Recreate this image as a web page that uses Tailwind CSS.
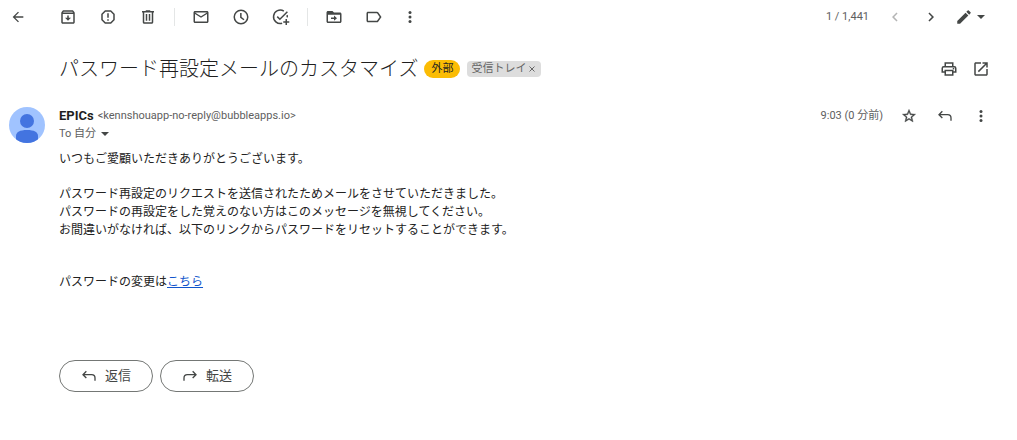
<!DOCTYPE html>
<html lang="ja">
<head>
<meta charset="utf-8">
<meta name="viewport" content="width=device-width, initial-scale=1">
<title>パスワード再設定メールのカスタマイズ</title>
<script src="https://cdn.jsdelivr.net/npm/@tailwindcss/browser@4"></script>
</head>
<body class="min-h-screen bg-white font-['Roboto','Noto_Sans_CJK_JP',sans-serif] text-xs text-[#222222]">
<header class="flex h-[34px] items-center text-[#444746]">
  <button type="button" aria-label="戻る" class="flex h-8 w-9 items-center justify-center"><svg class="size-4" viewBox="0 0 24 24" fill="currentColor"><path d="M20 11H7.83l5.59-5.59L12 4l-8 8 8 8 1.41-1.41L7.83 13H20v-2z"/></svg></button>
  <div class="ml-3 flex">
    <button type="button" aria-label="アーカイブ" class="flex h-8 w-10 items-center justify-center"><svg class="size-[18px]" viewBox="0 0 24 24" fill="currentColor"><path d="M20.5 5.2l-1.4-1.7C18.9 3.2 18.500 3 18 3H6c-.5 0-.9.2-1.200.5L3.500 5.200C3.200 5.600 3 6 3 6.500V19c0 1.100.9 2 2 2h14c1.100 0 2-.9 2-2V6.500c0-.5-.2-.9-.5-1.300zM6.200 5h11.600l.8 1H5.400l.8-1zM5 19V8h14v11H5zm8-9h-2v3H8l4 4 4-4h-3v-3z"/></svg></button>
    <button type="button" aria-label="迷惑メールを報告" class="flex h-8 w-10 items-center justify-center"><svg class="size-[18px]" viewBox="0 0 24 24" fill="none" stroke="currentColor" stroke-width="2"><path d="M8.300 4h7.400L20 8.300v7.400L15.700 20H8.300L4 15.700V8.300z" stroke-linejoin="round"/><path d="M12 7v6M12 15v2"/></svg></button>
    <button type="button" aria-label="削除" class="flex h-8 w-10 items-center justify-center"><svg class="size-[18px]" viewBox="0 0 24 24" fill="currentColor"><path d="M15 4V3H9v1H4v2h1v13c0 1.100.9 2 2 2h10c1.100 0 2-.9 2-2V6h1V4h-5zm2 15H7V6h10v13zM9 8h2v9H9zm4 0h2v9h-2z"/></svg></button>
  </div>
  <div class="mx-1.5 h-[18px] w-px bg-[#e4e6e6]"></div>
  <div class="flex">
    <button type="button" aria-label="未読にする" class="flex h-8 w-10 items-center justify-center"><svg class="size-[18px]" viewBox="0 0 24 24" fill="currentColor"><path d="M22 6c0-1.100-.9-2-2-2H4c-1.100 0-2 .9-2 2v12c0 1.100.9 2 2 2h16c1.100 0 2-.9 2-2V6zm-2 0l-8 5-8-5h16zm0 12H4V8l8 5 8-5v10z"/></svg></button>
    <button type="button" aria-label="スヌーズ" class="flex h-8 w-10 items-center justify-center"><svg class="size-[18px]" viewBox="0 0 24 24" fill="none" stroke="currentColor" stroke-width="2"><circle cx="12" cy="12" r="9"/><path d="M11.800 6.500v6l4.200 3.200"/></svg></button>
    <button type="button" aria-label="ToDo リストに追加" class="flex h-8 w-10 items-center justify-center"><svg class="size-[18px]" viewBox="0 0 24 24" fill="none" stroke="currentColor" stroke-width="2"><path d="M15.800 4.100A9 9 0 1 0 13.500 20.400M20 9.500q.5 1.400.3 3"/><path d="M7 11.500l3.500 3.500L20.500 5M19 14.500v8M15 18.500h8"/></svg></button>
  </div>
  <div class="mx-1.5 h-[18px] w-px bg-[#e4e6e6]"></div>
  <div class="flex">
    <button type="button" aria-label="移動" class="flex h-8 w-10 items-center justify-center"><svg class="size-[18px]" viewBox="0 0 24 24" fill="currentColor"><path d="M20 6h-8l-2-2H4c-1.100 0-2 .9-2 2v12c0 1.100.9 2 2 2h16c1.100 0 2-.9 2-2V8c0-1.100-.9-2-2-2zm0 12H4V9h16v9zm-8-1l4-3.500-4-3.500v2.500H8v2h4v2.500z"/></svg></button>
    <button type="button" aria-label="ラベル" class="flex h-8 w-10 items-center justify-center"><svg class="size-[18px]" viewBox="0 0 24 24" fill="currentColor"><path d="M16 5H4c-1.100 0-2 .9-2 2v10c0 1.100.9 2 2 2h12c.7 0 1.300-.3 1.600-.8L22 12l-4.400-6.200C17.300 5.300 16.700 5 16 5zm0 12H4V7h12l3.600 5-3.600 5z"/></svg></button>
    <button type="button" aria-label="その他" class="flex h-8 w-8 items-center justify-center"><svg class="size-[18px]" viewBox="0 0 24 24" fill="currentColor"><circle cx="12" cy="6" r="2"/><circle cx="12" cy="12" r="2"/><circle cx="12" cy="18" r="2"/></svg></button>
  </div>
  <div class="ml-auto flex items-center pr-8">
    <span class="mr-2 text-[11px] text-[#5e5e5e]">1 / 1,441</span>
    <button type="button" aria-label="新しい" disabled class="flex h-8 w-9 items-center justify-center text-[#b4b5b5]"><svg class="size-[18px]" viewBox="0 0 24 24" fill="currentColor"><path d="M15.410 7.410L14 6l-6 6 6 6 1.410-1.410L10.830 12z"/></svg></button>
    <button type="button" aria-label="古い" class="flex h-8 w-9 items-center justify-center"><svg class="size-[18px]" viewBox="0 0 24 24" fill="currentColor"><path d="M10 6L8.590 7.410 13.170 12l-4.580 4.590L10 18l6-6z"/></svg></button>
    <button type="button" aria-label="入力ツール" class="ml-1.5 flex h-8 items-center"><svg class="size-[18px]" viewBox="0 0 24 24" fill="currentColor"><path d="M3 17.250V21h3.750L17.810 9.940l-3.750-3.750L3 17.250zM20.710 7.040a1 1 0 0 0 0-1.410l-2.340-2.340a1 1 0 0 0-1.410 0l-1.830 1.830 3.750 3.750 1.830-1.830z"/></svg><svg class="ml-1 h-1 w-2" viewBox="0 0 8 4" fill="currentColor"><path d="M0 0h8L4 4z"/></svg></button>
  </div>
</header>

<main>
  <div class="flex items-center pt-[19px] pr-5 pl-[59px]">
    <h1 class="text-xl leading-[30px] font-light text-[#1f1f1f]">パスワード再設定メールのカスタマイズ</h1>
    <span class="ml-1.5 flex h-[18px] items-center rounded-full bg-[#fbbc04] px-[7px] text-[11px] text-[#222222]">外部</span>
    <span class="ml-[7px] flex h-4 items-center gap-px rounded-sm bg-[#dddddd] px-1 text-[11px] text-[#666666]">受信トレイ<button type="button" aria-label="ラベルを削除" class="flex h-4 w-2.5 items-center justify-center"><svg class="size-1.5" viewBox="0 0 6 6" fill="none" stroke="currentColor"><path d="M.5.5l5 5M5.500.5l-5 5"/></svg></button></span>
    <div class="ml-auto flex text-[#444746]">
      <button type="button" aria-label="印刷" class="flex size-8 items-center justify-center"><svg class="size-[18px]" viewBox="0 0 24 24" fill="none" stroke="currentColor" stroke-width="2"><path d="M7 8V4h10v4M7 16H3v-5q0-2 2-2h14q2 0 2 2v5h-4M7 14h10v6H7z"/><path d="M17 11.500h2"/></svg></button>
      <button type="button" aria-label="新しいウィンドウで開く" class="flex size-8 items-center justify-center"><svg class="size-[18px]" viewBox="0 0 24 24" fill="currentColor"><path d="M19 19H5V5h7V3H5c-1.110 0-2 .9-2 2v14c0 1.100.89 2 2 2h14c1.100 0 2-.9 2-2v-7h-2v7zM14 3v2h3.590l-9.830 9.830 1.410 1.410L19 6.410V10h2V3h-7z"/></svg></button>
    </div>
  </div>

  <article class="flex pt-[22px] pr-[18px] pl-[9px]">
    <svg class="mr-3.5 size-9 shrink-0" viewBox="0 0 36 36" role="img" aria-label="EPICs"><clipPath id="avatar"><circle cx="18" cy="18" r="18"/></clipPath><g clip-path="url(#avatar)"><path fill="#a0c3ff" d="M0 0h36v36H0z"/><circle cx="18" cy="14" r="7" fill="#4374e0"/><path fill="#4374e0" d="M7 36v-7c0-4 4-6 11-6s11 2 11 6v7z"/></g></svg>
    <div class="min-w-0 flex-1">
      <div class="flex items-start">
        <div>
          <div class="flex h-[18px] items-center gap-1"><span class="text-[13px] font-bold text-[#1f1f1f]">EPICs</span><span class="text-[11px] text-[#5e5e5e]">&lt;kennshouapp-no-reply@bubbleapps.io&gt;</span></div>
          <button type="button" class="flex h-[18px] items-center gap-[5px] text-[11px] text-[#5e5e5e]">To 自分<svg class="h-1 w-2" viewBox="0 0 8 4" fill="#444746"><path d="M0 0h8L4 4z"/></svg></button>
        </div>
        <div class="ml-auto flex h-[18px] items-center text-[#444746]">
          <time class="mr-2 text-[11px] text-[#5e5e5e]">9:03 (0 分前)</time>
          <button type="button" aria-label="スター" class="flex h-8 w-9 items-center justify-center"><svg class="size-4" viewBox="0 0 24 24" fill="currentColor" stroke="currentColor" stroke-width=".5"><path d="M22 9.240l-7.190-.62L12 2 9.190 8.630 2 9.240l5.460 4.730L5.820 21 12 17.270 18.180 21l-1.630-7.030L22 9.240zM12 15.400l-3.760 2.270 1-4.280-3.320-2.880 4.380-.38L12 6.100l1.710 4.040 4.380.38-3.320 2.880 1 4.280L12 15.400z"/></svg></button>
          <button type="button" aria-label="返信" class="flex h-8 w-9 items-center justify-center"><svg class="size-4" viewBox="0 0 24 24" fill="none" stroke="currentColor" stroke-width="2"><path d="M8 5l-5 5 5 5M3 10h13q5 0 5 5v4"/></svg></button>
          <button type="button" aria-label="その他" class="flex h-8 w-9 items-center justify-center"><svg class="size-[18px]" viewBox="0 0 24 24" fill="currentColor"><circle cx="12" cy="6" r="2"/><circle cx="12" cy="12" r="2"/><circle cx="12" cy="18" r="2"/></svg></button>
        </div>
      </div>
      <div class="pt-[7px] text-xs leading-[18px]">
        <p>いつもご愛顧いただきありがとうございます。</p>
        <p class="mt-[17px]">パスワード再設定のリクエストを送信されたためメールをさせていただきました。<br>パスワードの再設定をした覚えのない方はこのメッセージを無視してください。<br>お間違いがなければ、以下のリンクからパスワードをリセットすることができます。</p>
        <p class="mt-[34px]">パスワードの変更は<a href="#" class="text-[#1155cc] underline">こちら</a></p>
      </div>
      <div class="mt-[69px] flex gap-[7px] pb-8 text-[13px] text-[#444746]">
        <button type="button" class="flex h-8 items-center gap-2 rounded-full border border-[#747775] px-[21px]"><svg class="size-4" viewBox="0 0 24 24" fill="none" stroke="currentColor" stroke-width="2"><path d="M8 5l-5 5 5 5M3 10h13q5 0 5 5v4"/></svg>返信</button>
        <button type="button" class="flex h-8 items-center gap-2 rounded-full border border-[#747775] px-[21px]"><svg class="size-4" viewBox="0 0 24 24" fill="none" stroke="currentColor" stroke-width="2"><path d="M16 5l5 5-5 5M21 10H8q-5 0-5 5v4"/></svg>転送</button>
      </div>
    </div>
  </article>
</main>
</body>
</html>
